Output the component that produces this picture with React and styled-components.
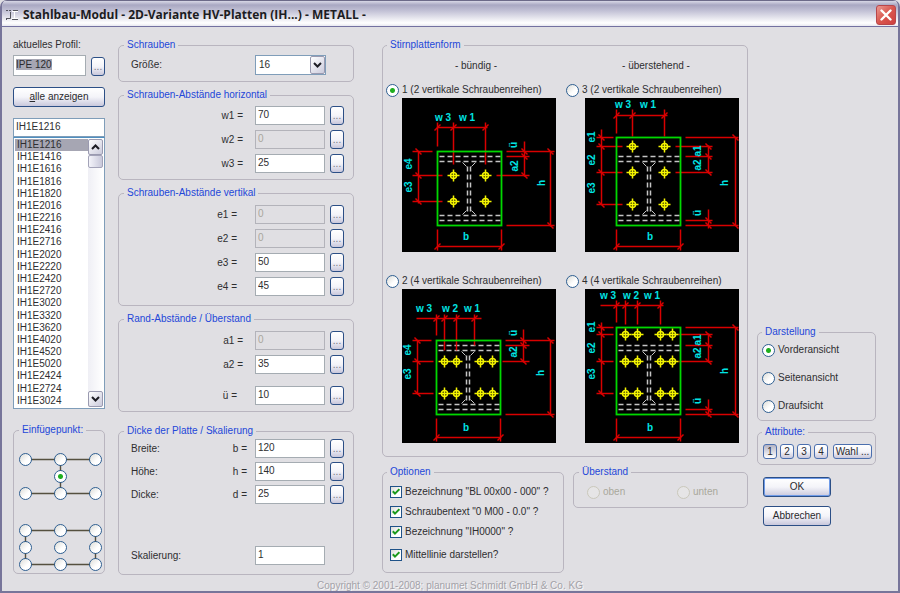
import React, { useEffect, useRef, useState } from 'react';
import styled, { createGlobalStyle, css } from 'styled-components';

const GlobalStyle = createGlobalStyle`
    *, *::before, *::after {
        box-sizing: border-box;
    }

    body {
        margin: 0;
        background: #e0dfe3;
    }

    body, input, button, select {
        font-family: "Liberation Sans", Arial, sans-serif;
        font-size: 10px;
        line-height: 14px;
        color: #2e2e30;
    }
`;

// Window frame
const Window = styled.div`
    display: flex;
    flex-direction: column;
    min-height: 100vh;
    border: 2px solid #77759a;
    border-top: none;
    border-radius: 7px 7px 0 0;
    background: #e0dfe3;
    overflow: hidden;
`;

const TitleBar = styled.header`
    display: flex;
    align-items: center;
    gap: 5px;
    height: 27px;
    padding: 3px 2px 0 4px;
    border-top: 1px solid #6c6a88;
    border-bottom: 1px solid #7371a0;
    background: linear-gradient(#d8d8e6 0, #a9a8c2 4px, #c3c2d6 10px, #fff 22px, #e8e8f0 100%);
`;

const Title = styled.h1`
    flex: 1;
    margin: 0;
    font-family: "Open Sans", sans-serif;
    font-size: 12px;
    font-weight: 700;
    line-height: 18px;
    color: #1c1c22;
`;

const CloseButton = styled.button`
    display: flex;
    align-items: center;
    justify-content: center;
    width: 20px;
    height: 20px;
    padding: 0;
    border: 1px solid #b8464a;
    border-radius: 3px;
    background: linear-gradient(135deg, #eb9a92, #d9564e 50%, #cf4040);
`;

const Body = styled.main`
    display: grid;
    grid-template-columns: 92px 249px 1fr 128px;
    padding: 11px 22px 0 11px;
`;

const Column = styled.div`
    display: flex;
    flex-direction: column;
    min-width: 0;
    margin-left: ${props => props.$left || 0}px;
`;

const SideColumn = styled(Column)`
    justify-content: flex-end;
`;

const Footer = styled.footer`
    height: 16px;
    padding-top: 4px;
    text-align: center;
    line-height: 14px;
    color: #a3a2a8;
    text-shadow: 1px 1px 0 #f8f8fa;
`;

// Groups
const Group = styled.fieldset`
    min-width: 0;
    margin: 0;
    margin-top: ${props => props.$top || 0}px;
    padding: ${props => props.$pad || '0'};
    border: 1px solid #b9b5bf;
    border-radius: 5px;
`;

const Legend = styled.legend`
    margin-left: ${props => props.$left ?? 5}px;
    padding: 0 3px;
    line-height: 14px;
    color: #2347d9;
`;

const Rows = styled.div`
    display: flex;
    flex-direction: column;
    gap: ${props => props.$gap}px;
`;

// Controls
const xpButton = css`
    border: 1px solid #2c4f86;
    border-radius: 3px;
    background: linear-gradient(#fff, #f4f4f9 50%, #c9c8dc);
    color: #2a2a2e;
`;

const DotsButton = styled.button`
    ${xpButton}
    width: 14px;
    height: 19px;
    padding: 0;
    line-height: 16px;
    text-align: center;
    color: #77767f;
`;

const WideButton = styled.button`
    ${xpButton}
    width: ${props => props.$width || '100%'};
    height: 20px;
    padding: 0;
    line-height: 18px;
    box-shadow: ${props => props.$isDefault ? 'inset 0 0 0 1px #6f9be8' : 'none'};
`;

const AttributeButton = styled.button`
    ${xpButton}
    flex: ${props => props.$grow ? '1' : '0 0 14px'};
    height: 15px;
    margin-left: ${props => props.$grow ? 2 : 0}px;
    padding: 0;
    border-color: #4b6fae;
    line-height: 13px;
    white-space: nowrap;
    ${props => props.$pressed && css`
        background: linear-gradient(#b4b3c4, #fff);
    `}
`;

const TextInput = styled.input`
    width: ${props => props.$width || '70px'};
    height: ${props => props.$height || 19}px;
    padding: 0 2px 2px;
    border: 1px solid #a5acb2;
    border-radius: 0;
    outline: none;
    background: #fff;

    &:disabled {
        background: #e0dfe3;
        border-color: #b3b3ba;
        color: #a9a69c;
    }

    &::selection {
        background: #a6a6b3;
        color: #2a2a2e;
    }
`;

const FieldRow = styled.div`
    display: flex;
    align-items: center;
    margin-top: ${props => props.$top || 0}px;
    padding-left: 12px;
    padding-right: 9px;

    ${DotsButton} {
        margin-left: 5px;
    }
`;

const FieldLabel = styled.label`
    display: flex;
    flex: 1;
    justify-content: ${props => props.$split ? 'space-between' : 'flex-end'};
    padding-right: ${props => props.$gap}px;
    white-space: pre;
`;

const Spacer = styled.span`
    width: ${props => props.$width || 19}px;
`;

const SelectBox = styled.div`
    position: relative;
    width: 71px;
    height: 20px;
`;

const Select = styled.select`
    width: 100%;
    height: 100%;
    padding: 0 3px;
    appearance: none;
    border: 1px solid #7f9db9;
    border-radius: 0;
    background: #fff;
`;

const ArrowBox = styled.span`
    display: flex;
    align-items: center;
    justify-content: center;
    width: 15px;
    height: ${props => props.$height || 16}px;
    border: 1px solid #9a9ab0;
    border-radius: 2px;
    background: linear-gradient(135deg, #fff, #cbcbdc);
`;

const SelectArrow = styled(ArrowBox)`
    position: absolute;
    top: 1px;
    right: 1px;
    pointer-events: none;
`;

const Radio = styled.input.attrs({ type: 'radio' })`
    appearance: none;
    position: relative;
    flex: none;
    width: 13px;
    height: 13px;
    margin: 0;
    border: 1px solid #2f5f92;
    border-radius: 50%;
    background: linear-gradient(135deg, #dcdcd7, #fff 60%);

    &:checked {
        background: radial-gradient(circle, #1fae1f 0, #1fae1f 2px, #fff 3px);
    }

    &:disabled {
        border-color: #cac8bb;
        background: #e6e5e6;
    }
`;

const CheckBox = styled.span`
    position: relative;
    width: 12px;
    height: 12px;

    input {
        display: block;
        appearance: none;
        width: 12px;
        height: 12px;
        margin: 0;
        border: 1px solid #1f5288;
        background: linear-gradient(135deg, #dcdcd7, #fff 60%);
    }

    svg {
        position: absolute;
        top: 2px;
        left: 2px;
        pointer-events: none;
    }

    input:not(:checked) + svg {
        display: none;
    }
`;

const ChoiceLabel = styled.label`
    display: flex;
    align-items: center;
    gap: 3px;
    height: ${props => props.$height || 16}px;
    margin-top: ${props => props.$top || 0}px;
    white-space: nowrap;
    color: ${props => props.$disabled ? '#a9a89c' : 'inherit'};
`;

// Profile list
const ProfileRow = styled.div`
    display: flex;
    align-items: flex-end;
    justify-content: space-between;
    margin: 3px 0 11px;
`;

const ListSearch = styled(TextInput)`
    margin-top: 11px;
    border-color: #7f9db9;
`;

const ListFrame = styled.div`
    display: flex;
    height: 272px;
    padding: 1px;
    border: 1px solid #7f9db9;
    border-top-color: #4e8fc0;
    background: #fff;
`;

const List = styled.ul`
    display: grid;
    flex: 1;
    grid-auto-rows: 1fr;
    margin: 0;
    padding: 0;
    list-style: none;
`;

const ListItem = styled.li`
    padding-left: 2px;
    line-height: 12px;
    background: ${props => props.$selected ? '#a6a6b3' : 'transparent'};
`;

const ScrollTrack = styled.div`
    display: flex;
    flex-direction: column;
    width: 15px;
    background: linear-gradient(90deg, #efeff5, #fff);

    ${ArrowBox}:last-child {
        margin-top: auto;
    }
`;

const ScrollThumb = styled.span`
    height: 13px;
    border: 1px solid #a3a3b8;
    border-radius: 2px;
    background: linear-gradient(90deg, #f4f4fa, #c8c8da);
`;

// Insertion points
const PointGrid = styled.div`
    position: relative;
    display: grid;
    grid-template-columns: repeat(3, 13px);
    justify-content: space-between;
    row-gap: 4px;
    margin-top: ${props => props.$top}px;

    svg {
        position: absolute;
        inset: 0;
        width: 100%;
        height: 100%;
    }
`;

// End plates
const PlateGrid = styled.div`
    display: grid;
    grid-template-columns: 180px 1fr;
`;

const PlateHeading = styled.div`
    width: 180px;
    padding: 7px 0 9px;
    text-align: center;
`;

const Plate = styled.div`
    margin-top: ${props => props.$top || 0}px;

    svg {
        display: block;
        margin-left: ${props => props.$indent}px;
    }
`;

const LowerRow = styled.div`
    display: grid;
    grid-template-columns: 182px 1fr;
    align-items: start;
    gap: 9px;
    margin-top: 8px;
`;

const OverhangRow = styled.div`
    display: grid;
    grid-template-columns: 90px 1fr;
`;

const AttributeRow = styled.div`
    display: flex;
    gap: 3px;
`;

const ActionRow = styled.div`
    display: flex;
    flex-direction: column;
    gap: 9px;
    padding: 12px 6px 49px;
`;

const profiles = [
    'IH1E1216', 'IH1E1416', 'IH1E1616', 'IH1E1816', 'IH1E1820', 'IH1E2016', 'IH1E2216', 'IH1E2416',
    'IH1E2716', 'IH1E2020', 'IH1E2220', 'IH1E2420', 'IH1E2720', 'IH1E3020', 'IH1E3320', 'IH1E3620',
    'IH1E4020', 'IH1E4520', 'IH1E5020', 'IH1E2424', 'IH1E2724', 'IH1E3024',
];

// All plate coordinates live in a 154 x 154 drawing.
// dims: [x1, y1, x2, y2, ticks], ext: extension lines, labels: [text, x, y, rotated]
const plates = {
    1: {
        rect: [35, 53, 99, 127],
        flanges: [58, 63, 117, 122],
        web: [65, 68],
        boltX: [51, 83],
        boltY: [77, 103],
        dims: [
            [35, 29, 85, 29, [35, 51, 83]],
            [16, 53, 16, 105, [53, 77, 103]],
            [122, 43, 122, 78, [53, 58, 77]],
            [148, 53, 148, 128, [53, 127]],
            [35, 148, 99, 148, [35, 99]],
        ],
        ext: [
            [35, 24, 35, 48], [51, 24, 51, 66], [83, 24, 83, 66],
            [10, 53, 30, 53], [10, 77, 40, 77], [10, 103, 40, 103],
            [104, 53, 152, 53], [104, 58, 127, 58], [94, 77, 127, 77], [104, 127, 152, 127],
            [35, 131, 35, 152], [99, 131, 99, 152],
        ],
        labels: [
            ['w 3', 41, 20], ['w 1', 65, 20], ['e4', 7, 66, true], ['e3', 7, 89, true],
            ['ü', 112, 47, true], ['a2', 113, 68, true], ['h', 140, 85, true], ['b', 64, 139],
        ],
    },
    2: {
        rect: [34, 51, 98, 125],
        flanges: [56, 61, 115, 120],
        web: [64, 67],
        boltX: [42, 54, 78, 90],
        boltY: [72, 104],
        dims: [
            [14, 29, 79, 29, [34, 42, 54, 72]],
            [15, 51, 15, 105, [51, 72, 104]],
            [121, 40, 121, 73, [51, 56, 72]],
            [148, 51, 148, 126, [51, 125]],
            [34, 148, 98, 148, [34, 98]],
        ],
        ext: [
            [34, 25, 34, 46], [42, 25, 42, 61], [54, 25, 54, 61], [72, 25, 72, 56],
            [10, 51, 29, 51], [10, 72, 31, 72], [10, 104, 31, 104],
            [103, 51, 152, 51], [103, 56, 127, 56], [100, 72, 127, 72], [103, 125, 152, 125],
            [34, 129, 34, 152], [98, 129, 98, 152],
        ],
        labels: [
            ['w 3', 22, 20], ['w 2', 48, 20], ['w 1', 70, 20], ['e4', 6, 61, true], ['e3', 6, 85, true],
            ['ü', 112, 44, true], ['a2', 112, 63, true], ['h', 139, 84, true], ['b', 64, 139],
        ],
    },
    3: {
        rect: [31, 39, 95, 127],
        flanges: [58, 63, 117, 122],
        web: [62, 65],
        boltX: [47, 79],
        boltY: [48, 74, 106],
        dims: [
            [31, 17, 82, 17, [31, 47, 79]],
            [16, 31, 16, 106, [39, 48, 74, 106]],
            [123, 47, 123, 75, [48, 58, 74]],
            [123, 111, 123, 130, [122, 127]],
            [150, 39, 150, 127, [39, 127]],
            [31, 148, 95, 148, [31, 95]],
        ],
        ext: [
            [31, 11, 31, 35], [47, 11, 47, 38], [79, 11, 79, 38],
            [11, 39, 28, 39], [11, 48, 37, 48], [11, 74, 37, 74], [11, 106, 37, 106],
            [100, 39, 153, 39], [90, 48, 127, 48], [100, 58, 127, 58], [90, 74, 127, 74],
            [100, 122, 127, 122], [100, 127, 153, 127],
            [31, 131, 31, 152], [95, 131, 95, 152],
        ],
        labels: [
            ['w 3', 38, 7], ['w 1', 63, 7], ['e1', 7, 39, true], ['e2', 7, 62, true], ['e3', 7, 90, true],
            ['a1', 113, 53, true], ['a2', 113, 67, true], ['ü', 113, 115, true], ['h', 140, 85, true], ['b', 65, 139],
        ],
    },
    4: {
        rect: [31, 38, 95, 125],
        flanges: [56, 61, 115, 120],
        web: [62, 65],
        boltX: [40, 52, 75, 87],
        boltY: [45, 72, 104],
        dims: [
            [15, 16, 78, 16, [31, 40, 52, 75]],
            [16, 33, 16, 105, [38, 45, 72, 104]],
            [123, 44, 123, 73, [45, 56, 72]],
            [123, 110, 123, 127, [120, 125]],
            [150, 38, 150, 126, [38, 125]],
            [31, 148, 95, 148, [31, 95]],
        ],
        ext: [
            [31, 11, 31, 33], [40, 11, 40, 35], [52, 11, 52, 35], [75, 11, 75, 35],
            [11, 38, 28, 38], [11, 45, 28, 45], [11, 72, 28, 72], [11, 104, 28, 104],
            [100, 38, 153, 38], [93, 45, 127, 45], [100, 56, 127, 56], [93, 72, 127, 72],
            [100, 120, 127, 120], [100, 125, 153, 125],
            [31, 129, 31, 152], [95, 129, 95, 152],
        ],
        labels: [
            ['w 3', 23, 7], ['w 2', 46, 7], ['w 1', 67, 7], ['e1', 7, 38, true], ['e2', 7, 59, true], ['e3', 7, 85, true],
            ['a1', 113, 51, true], ['a2', 113, 64, true], ['ü', 113, 112, true], ['h', 140, 82, true], ['b', 65, 139],
        ],
    },
};

const line = ([x1, y1, x2, y2], key) => <line key={key} x1={x1} y1={y1} x2={x2} y2={y2} />;

const PlateDrawing = ({ plate }) => {
    const [left, top, right, bottom] = plate.rect;
    const [, upper, lower] = plate.flanges;
    const [webL, webR] = plate.web;

    return (
        <svg width="154" height="154" viewBox="0 0 154 154" aria-hidden="true">
            <rect width="154" height="154" fill="#000" />
            <g transform="translate(0.5 0.5)" fill="none">
                <g stroke="#c4c4c4" strokeWidth="1.5" strokeDasharray="5 3">
                    {plate.flanges.map(y => line([left + 2, y, right - 1, y], y))}
                    {plate.web.map(x => line([x, upper + 5, x, lower - 4], x))}
                </g>
                <path
                    stroke="#c4c4c4"
                    d={`M${webL - 5} ${upper + 1}l4 4M${webR + 5} ${upper + 1}l-4 4M${webL - 5} ${lower - 1}l4 -4M${webR + 5} ${lower - 1}l-4 -4`}
                />
                <g stroke="#d90000" strokeWidth="1.5">
                    {plate.ext.map(line)}
                    {plate.dims.map(line)}
                    {plate.dims.map(([x1, y1, x2, y2, ticks]) => ticks.map(t => (
                        y1 === y2
                            ? <path key={`h${y1}-${t}`} d={`M${t - 3} ${y1 + 3}l6 -6`} />
                            : <path key={`v${x1}-${t}`} d={`M${x1 - 3} ${t - 3}l6 6`} />
                    )))}
                </g>
                <rect x={left} y={top} width={right - left} height={bottom - top} stroke="#00d800" strokeWidth="1.8" />
                <g stroke="#f4f400" strokeWidth="1.5">
                    {plate.boltY.map(y => plate.boltX.map(x => (
                        <g key={`${x}-${y}`}>
                            <path d={`M${x - 6} ${y}h12M${x} ${y - 6}v12`} />
                            <circle cx={x} cy={y} r="3" />
                        </g>
                    )))}
                </g>
            </g>
            <g fill="#00e4e4" fontFamily="Liberation Sans, sans-serif" fontSize="10" fontWeight="700" textAnchor="middle">
                {plate.labels.map(([text, x, y, rotated]) => (
                    <text key={text} transform={`translate(${x} ${y})${rotated ? ' rotate(-90)' : ''}`} y="3">{text}</text>
                ))}
            </g>
        </svg>
    );
};

const Chevron = ({ up }) => (
    <svg width="9" height="6" viewBox="0 0 9 6" fill="none" stroke="#1d1d24" strokeWidth="2" aria-hidden="true">
        <path d={up ? 'M1 5l3.5-3.5L8 5' : 'M1 1l3.5 3.5L8 1'} />
    </svg>
);

const Field = ({ id, caption, name, value, gap = 12, disabled, noButton, top }) => (
    <FieldRow $top={top}>
        <FieldLabel htmlFor={id} $gap={gap} $split={Boolean(caption)}>
            {caption && <span>{caption}</span>}
            <span>{name}</span>
        </FieldLabel>
        <TextInput id={id} defaultValue={value} disabled={disabled} />
        {noButton ? <Spacer /> : <DotsButton aria-label={`${id} wählen`}>...</DotsButton>}
    </FieldRow>
);

const Check = ({ children, top }) => (
    <ChoiceLabel $height={20} $top={top}>
        <CheckBox>
            <input type="checkbox" defaultChecked />
            <svg width="8" height="8" viewBox="0 0 8 8" fill="none" stroke="#1c9a1c" strokeWidth="2">
                <path d="M0.8 3.2L3 5.6L7.4 1.2" />
            </svg>
        </CheckBox>
        {children}
    </ChoiceLabel>
);

const PlateOption = ({ number, rows, indent, top, form, setForm }) => (
    <Plate $indent={indent} $top={top}>
        <ChoiceLabel>
            <Radio name="form" checked={form === number} onChange={() => setForm(number)} />
            {number} ({rows} vertikale Schraubenreihen)
        </ChoiceLabel>
        <PlateDrawing plate={plates[number]} />
    </Plate>
);

const point = (name, column, row, checked) => (
    <Radio
        key={name}
        name="einfuegepunkt"
        aria-label={name}
        defaultChecked={checked}
        style={{ gridColumn: column, gridRow: row }}
    />
);

const App = () => {
    const [form, setForm] = useState(1);
    const [profile, setProfile] = useState(profiles[0]);
    const profileInput = useRef(null);

    useEffect(() => {
        profileInput.current.focus();
        profileInput.current.select();
    }, []);

    return (
        <>
            <GlobalStyle />
            <Window>
                <TitleBar>
                    <svg width="12" height="13" viewBox="0 0 12 13" fill="none" stroke="#55555f" aria-hidden="true">
                        <path d="M0 1.5h2M3 1.5h2M4.5 3v6.5h-4M0.5 9v2M7 1.5h5M6 10.5h6" strokeWidth="1" />
                        <path d="M6 2.5h6M8.5 2v8M6 9.5h6" stroke="#fff" />
                    </svg>
                    <Title>Stahlbau-Modul - 2D-Variante HV-Platten (IH...) - METALL -</Title>
                    <CloseButton aria-label="Schließen">
                        <svg width="12" height="12" viewBox="0 0 12 12" stroke="#fff" strokeWidth="2.4" strokeLinecap="round">
                            <path d="M1.5 1.5l9 9M10.5 1.5l-9 9" />
                        </svg>
                    </CloseButton>
                </TitleBar>

                <Body>
                    <Column>
                        <label htmlFor="profil">aktuelles Profil:</label>
                        <ProfileRow>
                            <TextInput id="profil" ref={profileInput} defaultValue="IPE 120" $width="73px" $height={21} />
                            <DotsButton aria-label="Profil wählen">...</DotsButton>
                        </ProfileRow>
                        <WideButton><u>a</u>lle anzeigen</WideButton>
                        <ListSearch
                            aria-label="Verbindung"
                            value={profile}
                            onChange={e => setProfile(e.target.value)}
                            $width="100%"
                        />
                        <ListFrame>
                            <List role="listbox" aria-label="Verbindungen">
                                {profiles.map(item => (
                                    <ListItem
                                        key={item}
                                        role="option"
                                        aria-selected={item === profile}
                                        $selected={item === profile}
                                        onClick={() => setProfile(item)}
                                    >
                                        {item}
                                    </ListItem>
                                ))}
                            </List>
                            <ScrollTrack>
                                <ArrowBox><Chevron up /></ArrowBox>
                                <ScrollThumb />
                                <ArrowBox><Chevron /></ArrowBox>
                            </ScrollTrack>
                        </ListFrame>
                        <Group $top={14} $pad="0 2px 2px 5px">
                            <Legend $left={0}>Einfügepunkt:</Legend>
                            <PointGrid $top={16}>
                                <svg viewBox="0 0 83 47" preserveAspectRatio="none" fill="none" stroke="#55503f" strokeWidth="1.4">
                                    <path d="M6 6.5H77M6 40.5H77M41.5 6V41" />
                                </svg>
                                {point('oben links', 1, 1)}
                                {point('oben mitte', 2, 1)}
                                {point('oben rechts', 3, 1)}
                                {point('mitte', 2, 2, true)}
                                {point('unten links', 1, 3)}
                                {point('unten mitte', 2, 3)}
                                {point('unten rechts', 3, 3)}
                            </PointGrid>
                            <PointGrid $top={24}>
                                <svg viewBox="0 0 83 47" preserveAspectRatio="none" fill="none" stroke="#55503f" strokeWidth="1.4">
                                    <path d="M6.5 6.5H76.5V40.5H6.5z" />
                                </svg>
                                {point('Platte oben links', 1, 1)}
                                {point('Platte oben mitte', 2, 1)}
                                {point('Platte oben rechts', 3, 1)}
                                {point('Platte mitte links', 1, 2)}
                                {point('Platte mitte', 2, 2)}
                                {point('Platte mitte rechts', 3, 2)}
                                {point('Platte unten links', 1, 3)}
                                {point('Platte unten mitte', 2, 3)}
                                {point('Platte unten rechts', 3, 3)}
                            </PointGrid>
                        </Group>
                    </Column>

                    <Column $left={13}>
                        <Group $pad="3px 0 6px">
                            <Legend>Schrauben</Legend>
                            <FieldRow>
                                <FieldLabel htmlFor="groesse" $gap={12} $split>Größe:</FieldLabel>
                                <SelectBox>
                                    <Select id="groesse" defaultValue="16">
                                        <option>12</option>
                                        <option>16</option>
                                        <option>20</option>
                                        <option>24</option>
                                    </Select>
                                    <SelectArrow $height={18}><Chevron /></SelectArrow>
                                </SelectBox>
                                <Spacer $width={18} />
                            </FieldRow>
                        </Group>

                        <Group $top={6} $pad="4px 0 6px">
                            <Legend>Schrauben-Abstände horizontal</Legend>
                            <Rows $gap={5}>
                                <Field id="w1" name="w1 =" value="70" />
                                <Field id="w2" name="w2 =" value="0" disabled />
                                <Field id="w3" name="w3 =" value="25" />
                            </Rows>
                        </Group>

                        <Group $top={6} $pad="5px 0 9px">
                            <Legend>Schrauben-Abstände vertikal</Legend>
                            <Rows $gap={5}>
                                <Field id="e1" name="e1 =" value="0" gap={18} disabled />
                                <Field id="e2" name="e2 =" value="0" gap={18} disabled />
                                <Field id="e3" name="e3 =" value="50" gap={18} />
                                <Field id="e4" name="e4 =" value="45" gap={18} />
                            </Rows>
                        </Group>

                        <Group $top={6} $pad="5px 0 6px">
                            <Legend>Rand-Abstände / Überstand</Legend>
                            <Rows $gap={5}>
                                <Field id="a1" name="a1 =" value="0" disabled />
                                <Field id="a2" name="a2 =" value="35" />
                                <Field id="ue" name="ü =" value="10" gap={18} top={7} />
                            </Rows>
                        </Group>

                        <Group $top={12} $pad="1px 0 9px">
                            <Legend>Dicke der Platte / Skalierung</Legend>
                            <Rows $gap={4}>
                                <Field id="b" caption="Breite:" name="b =" value="120" gap={8} />
                                <Field id="h" caption="Höhe:" name="h =" value="140" gap={8} />
                                <Field id="d" caption="Dicke:" name="d =" value="25" gap={8} />
                                <Field id="skalierung" caption="Skalierung:" value="1" noButton top={38} />
                            </Rows>
                        </Group>
                    </Column>

                    <Column $left={28}>
                        <Group $pad="0 0 13px 3px">
                            <Legend $left={1}>Stirnplattenform</Legend>
                            <PlateGrid>
                                <PlateHeading>- bündig -</PlateHeading>
                                <PlateHeading>- überstehend -</PlateHeading>
                                <PlateOption number={1} rows={2} indent={16} form={form} setForm={setForm} />
                                <PlateOption number={3} rows={2} indent={19} form={form} setForm={setForm} />
                                <PlateOption number={2} rows={4} indent={16} top={21} form={form} setForm={setForm} />
                                <PlateOption number={4} rows={4} indent={19} top={21} form={form} setForm={setForm} />
                            </PlateGrid>
                        </Group>

                        <LowerRow>
                            <Group $pad="3px 0 7px 7px">
                                <Legend $left={-3}>Optionen</Legend>
                                <Check>Bezeichnung "BL 00x00 - 000" ?</Check>
                                <Check>Schraubentext "0 M00 - 0.0" ?</Check>
                                <Check>Bezeichnung "IH0000" ?</Check>
                                <Check top={3}>Mittellinie darstellen?</Check>
                            </Group>
                            <Group $pad="5px 0 7px 13px" disabled>
                                <Legend $left={-8}>Überstand</Legend>
                                <OverhangRow>
                                    <ChoiceLabel $disabled><Radio name="ueberstand" />oben</ChoiceLabel>
                                    <ChoiceLabel $disabled><Radio name="ueberstand" />unten</ChoiceLabel>
                                </OverhangRow>
                            </Group>
                        </LowerRow>
                    </Column>

                    <SideColumn $left={9}>
                        <Group $pad="3px 0 6px 4px">
                            <Legend $left={0}>Darstellung</Legend>
                            <Rows $gap={12}>
                                <ChoiceLabel><Radio name="ansicht" defaultChecked />Vorderansicht</ChoiceLabel>
                                <ChoiceLabel><Radio name="ansicht" />Seitenansicht</ChoiceLabel>
                                <ChoiceLabel><Radio name="ansicht" />Draufsicht</ChoiceLabel>
                            </Rows>
                        </Group>
                        <Group $top={4} $pad="5px 3px 5px 5px">
                            <Legend $left={-1}>Attribute:</Legend>
                            <AttributeRow>
                                <AttributeButton $pressed>1</AttributeButton>
                                <AttributeButton>2</AttributeButton>
                                <AttributeButton>3</AttributeButton>
                                <AttributeButton>4</AttributeButton>
                                <AttributeButton $grow>Wahl ...</AttributeButton>
                            </AttributeRow>
                        </Group>
                        <ActionRow>
                            <WideButton $width="68px" $isDefault>OK</WideButton>
                            <WideButton $width="68px">Abbrechen</WideButton>
                        </ActionRow>
                    </SideColumn>
                </Body>
                <Footer>Copyright © 2001-2008; planumet Schmidt GmbH &amp; Co. KG</Footer>
            </Window>
        </>
    );
};

export default App;
